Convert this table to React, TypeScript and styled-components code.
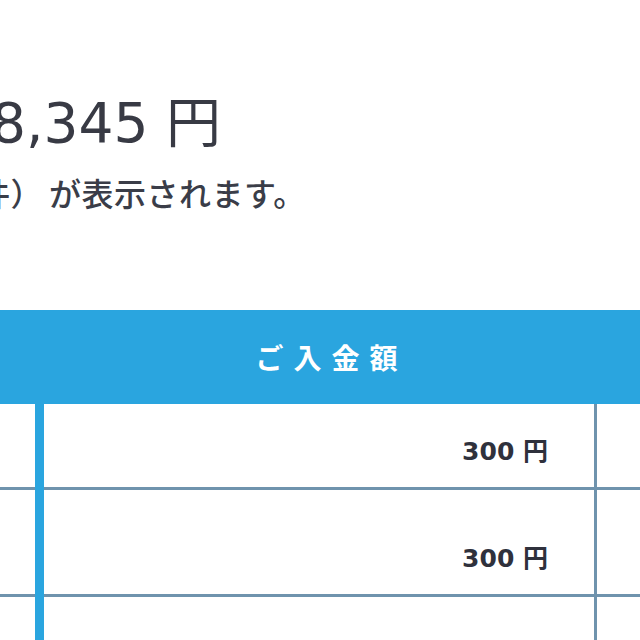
import React from "react";
import styled, { createGlobalStyle } from "styled-components";

const Global = createGlobalStyle`
  html, body { margin: 0; padding: 0; background: #ffffff; }
  body { width: 640px; height: 640px; overflow: hidden; }
`;

const BLUE = "#2aa5df";
const LINE = "#6f93ad";

const Page = styled.div`
  width: 640px;
  height: 640px;
  overflow: hidden;
  background: #ffffff;
  display: flex;
  flex-direction: column;
`;

const Summary = styled.section`
  display: flex;
  flex-direction: column;
  padding-top: 96px;
  height: 310px;
  flex-shrink: 0;
  box-sizing: border-box;
`;

const Total = styled.div`
  margin-left: -9px;
  font-family: "DejaVu Sans", "Noto Sans CJK JP", sans-serif;
  font-size: 55px;
  line-height: 1;
  color: #383a44;
  white-space: nowrap;
`;

const Note = styled.div`
  margin-top: 25px;
  margin-left: -22px;
  font-family: "Noto Sans CJK JP", sans-serif;
  font-size: 32px;
  font-weight: 500;
  line-height: 1;
  letter-spacing: 0.5px;
  color: #3a3d48;
  white-space: nowrap;
`;

const Paren = styled.span`
  margin-right: 6px;
`;

const Table = styled.div`
  display: flex;
  flex-direction: column;
`;

const columns = "35px 9px 553px 1fr";

const HeaderRow = styled.div`
  display: grid;
  grid-template-columns: ${columns};
  height: 94px;
  flex-shrink: 0;
  background: ${BLUE};
  align-items: center;
`;

const HeaderCell = styled.div`
  grid-column: 3;
  text-align: center;
  padding-left: 22px;
  font-family: "Noto Sans CJK JP", sans-serif;
  font-weight: 700;
  font-size: 28px;
  letter-spacing: 10px;
  color: #ffffff;
`;

const Row = styled.div<{ $h: number }>`
  display: grid;
  grid-template-columns: ${columns};
  height: ${(p) => p.$h}px;
  flex-shrink: 0;
`;

const Cell = styled.div<{ $edge?: boolean }>`
  border-bottom: 3px solid ${LINE};
  border-right: ${(p) => (p.$edge ? `3px solid ${LINE}` : "none")};
  display: flex;
  align-items: flex-end;
  justify-content: flex-end;
  padding: 0 46px 20px 0;
  box-sizing: border-box;
`;

const Divider = styled.div`
  background: ${BLUE};
`;

const Amount = styled.span`
  font-family: "DejaVu Sans", "Noto Sans CJK JP", sans-serif;
  font-weight: 700;
  font-size: 25px;
  line-height: 30px;
  color: #2f313c;
  white-space: nowrap;
`;

const rows = [
  { h: 86, amount: "300 円" },
  { h: 107, amount: "300 円" },
  { h: 110, amount: "" },
];

export default function App() {
  return (
    <Page>
      <Global />
      <Summary>
        <Total>8,345 円</Total>
        <Note>
          件<Paren>）</Paren>が表示されます。
        </Note>
      </Summary>
      <Table>
        <HeaderRow>
          <HeaderCell>ご入金額</HeaderCell>
        </HeaderRow>
        {rows.map((r, i) => (
          <Row key={i} $h={r.h}>
            <Cell />
            <Divider />
            <Cell $edge>{r.amount && <Amount>{r.amount}</Amount>}</Cell>
            <Cell />
          </Row>
        ))}
      </Table>
    </Page>
  );
}
